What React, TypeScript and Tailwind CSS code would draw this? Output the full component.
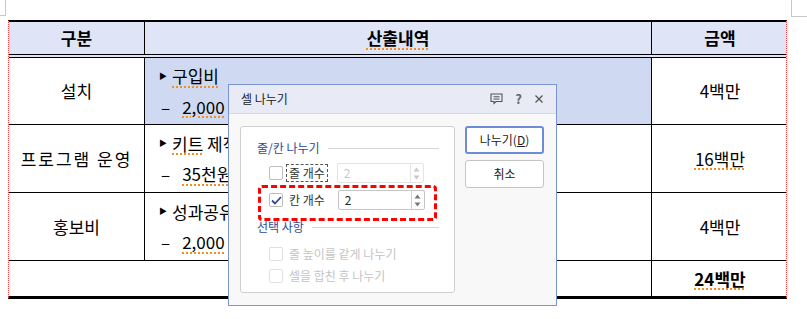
import { ReactNode } from 'react';

const font = { fontFamily: '"Noto Sans CJK KR", "Noto Sans", sans-serif' };

function Spell({ children }: { children: ReactNode }) {
  return (
    <span className="underline decoration-dotted decoration-[#f0901e] decoration-2 underline-offset-[3px]">
      {children}
    </span>
  );
}

function Bullet({ children }: { children: ReactNode }) {
  return (
    <div className="flex items-center gap-[5px]">
      <span className="text-[8px] text-black">▶</span>
      <span>{children}</span>
    </div>
  );
}

function Dash({ children }: { children: ReactNode }) {
  return (
    <div className="flex items-center gap-3 pl-[2px]">
      <span>–</span>
      <span>{children}</span>
    </div>
  );
}

function Row({
  label,
  lines,
  amount,
  selected,
  className,
}: {
  label: ReactNode;
  lines: ReactNode;
  amount: ReactNode;
  selected?: boolean;
  className?: string;
}) {
  return (
    <div className={`grid grid-cols-[136px_507px_136px] border-b border-black ${className ?? ''}`}>
      <div className="flex items-center justify-center border-r border-black">{label}</div>
      <div
        className={`flex flex-col justify-center gap-[5px] border-r border-black pl-[14px] ${
          selected ? 'bg-[#cfdaf2]' : ''
        }`}
      >
        {lines}
      </div>
      <div className="flex items-center justify-center">{amount}</div>
    </div>
  );
}

function Spinner({ disabled }: { disabled?: boolean }) {
  return (
    <div className={`flex h-full w-[13px] flex-col items-center justify-center border-l ${disabled ? 'border-[#e6e6e6] text-[#c8c8c8]' : 'border-[#cfcfcf] text-[#777]'}`}>
      <svg width="7" height="5" viewBox="0 0 7 5"><path d="M3.5 0.5 L6.5 4.5 L0.5 4.5 Z" fill="currentColor" /></svg>
      <svg width="7" height="5" viewBox="0 0 7 5" className="mt-[3px]"><path d="M3.5 4.5 L6.5 0.5 L0.5 0.5 Z" fill="currentColor" /></svg>
    </div>
  );
}

function Dialog() {
  return (
    <div
      className="absolute left-[228px] top-[84px] flex h-[222px] w-[329px] flex-col border border-[#7b95d3] bg-[#f8f8f8] text-[12px]"
      style={font}
    >
      <div className="flex h-[29px] items-center justify-between border-b border-[#d5d9e4] bg-[#e8ebf6] pl-[12px] pr-[12px]">
        <span className="text-[#222]">셀 나누기</span>
        <div className="flex items-center gap-[12px] text-[#555]">
          <svg width="13" height="12" viewBox="0 0 13 12" fill="none" stroke="currentColor" strokeWidth="1.1">
            <path d="M1 1 H12 V8.5 H6 L4 10.5 V8.5 H1 Z" />
            <path d="M3.5 3.8 H9.5 M3.5 6 H9.5" />
          </svg>
          <span className="text-[13px] font-bold text-[#666]">?</span>
          <svg width="10" height="10" viewBox="0 0 10 10" stroke="currentColor" strokeWidth="1.3">
            <path d="M1.5 1.5 L8.5 8.5 M8.5 1.5 L1.5 8.5" />
          </svg>
        </div>
      </div>
      <div className="flex flex-1 gap-[10px] pl-[11px] pr-[12px] pt-[12px] pb-[12px]">
        <div className="relative flex w-[215px] flex-col rounded-[3px] border border-[#cfcfcf] bg-white pl-[16px] pr-[15px] pt-[12px]">
          <div className="flex items-center gap-2">
            <span className="text-[#2d4a99]">줄/칸 나누기</span>
            <div className="h-px flex-1 bg-[#d6d6d6]" />
          </div>
          <div className="mt-[6px] flex h-[20px] items-center">
            <div className="ml-[12px] h-[14px] w-[14px] rounded-[2px] border border-[#bdbdbd] bg-white" />
            <span className="ml-[3px] border border-dashed border-[#555] px-[2px] leading-[16px] text-[#333]">줄 개수</span>
            <div className="ml-[9px] flex h-[20px] w-[87px] items-center justify-between rounded-[2px] border border-[#e4e4e4] pl-[6px]">
              <span className="text-[#c8c8c8]">2</span>
              <Spinner disabled />
            </div>
          </div>
          <div className="relative mt-[7px] flex h-[20px] items-center">
            <div className="ml-[12px] flex h-[14px] w-[14px] items-center justify-center rounded-[2px] border border-[#bdbdbd] bg-white">
              <svg width="11" height="9" viewBox="0 0 11 9" fill="none" stroke="#2d4a99" strokeWidth="1.8">
                <path d="M1 4.5 L4 7.5 L10 1" />
              </svg>
            </div>
            <span className="ml-[6px] text-[#333]">칸 개수</span>
            <div className="ml-[13px] flex h-[20px] w-[87px] items-center justify-between rounded-[2px] border border-[#c6c6c6] bg-white pl-[6px]">
              <span className="text-[#222]">2</span>
              <Spinner />
            </div>
            <div className="absolute left-[1px] top-[-5px] h-[36px] w-[179px] rounded-[4px] border-[3px] border-dashed border-[#ff0000]" />
          </div>
          <div className="mt-[8px] flex items-center gap-2">
            <span className="text-[#2d4a99]">선택 사항</span>
            <div className="h-px flex-1 bg-[#d6d6d6]" />
          </div>
          <div className="mt-[8px] flex h-[20px] items-center">
            <div className="ml-[12px] h-[14px] w-[14px] rounded-[2px] border border-[#e0e0e0] bg-white" />
            <span className="ml-[6px] text-[#c4c4c4]">줄 높이를 같게 나누기</span>
          </div>
          <div className="mt-[2px] flex h-[20px] items-center">
            <div className="ml-[12px] h-[14px] w-[14px] rounded-[2px] border border-[#e0e0e0] bg-white" />
            <span className="ml-[6px] text-[#c4c4c4]">셀을 합친 후 나누기</span>
          </div>
        </div>
        <div className="flex flex-col gap-[6px]">
          <button
            type="button"
            className="flex h-[28px] w-[79px] items-center justify-center rounded-[3px] border-2 border-[#6c8bd8] bg-white text-[#222]"
          >
            나누기(<span className="underline">D</span>)
          </button>
          <button
            type="button"
            className="flex h-[28px] w-[79px] items-center justify-center rounded-[3px] border border-[#c4c4c4] bg-white text-[#222]"
          >
            취소
          </button>
        </div>
      </div>
    </div>
  );
}

export default function App() {
  return (
    <main className="relative h-[319px] w-[807px] overflow-hidden bg-white text-[17px] text-black" style={font}>
      {/* page corner marks */}
      <div className="absolute left-0 top-0 h-[16px] w-[6px] border-b border-r border-[#c8c8c8]" />
      <div className="absolute right-0 top-0 h-[17px] w-[16px] border-b border-l border-[#c8c8c8]" />

      <div className="pl-[8px] pt-[20px]">
        <div
          className="w-[779px] border-x border-b-[3px] border-t-2 border-black border-x-[#ff3b3b]"
          style={{ borderLeftStyle: 'dotted', borderRightStyle: 'dotted' }}
        >
          <div className="grid h-[36px] grid-cols-[136px_507px_136px] border-b-4 border-double border-black bg-[#dfe5f6] font-bold">
            <div className="flex items-center justify-center border-r border-black">구분</div>
            <div className="flex items-center justify-center border-r border-black">
              <Spell>산출내역</Spell>
            </div>
            <div className="flex items-center justify-center">금액</div>
          </div>

          <Row
            className="h-[67px]"
            selected
            label="설치"
            lines={
              <>
                <Bullet><Spell>구입비</Spell></Bullet>
                <Dash><Spell>2,000</Spell></Dash>
              </>
            }
            amount="4백만"
          />
          <Row
            className="h-[68px]"
            label={<span className="tracking-[2px]">프로그램 운영</span>}
            lines={
              <>
                <Bullet><Spell>키트</Spell> 제작</Bullet>
                <Dash><Spell>35천원</Spell></Dash>
              </>
            }
            amount={<Spell>16백만</Spell>}
          />
          <Row
            className="h-[68px]"
            label="홍보비"
            lines={
              <>
                <Bullet>성과공유</Bullet>
                <Dash><Spell>2,000</Spell></Dash>
              </>
            }
            amount="4백만"
          />
          <div className="grid h-[35px] grid-cols-[136px_507px_136px]">
            <div />
            <div className="border-r border-black" />
            <div className="flex items-center justify-center font-bold">
              <Spell>24백만</Spell>
            </div>
          </div>
        </div>
      </div>

      <Dialog />
    </main>
  );
}
